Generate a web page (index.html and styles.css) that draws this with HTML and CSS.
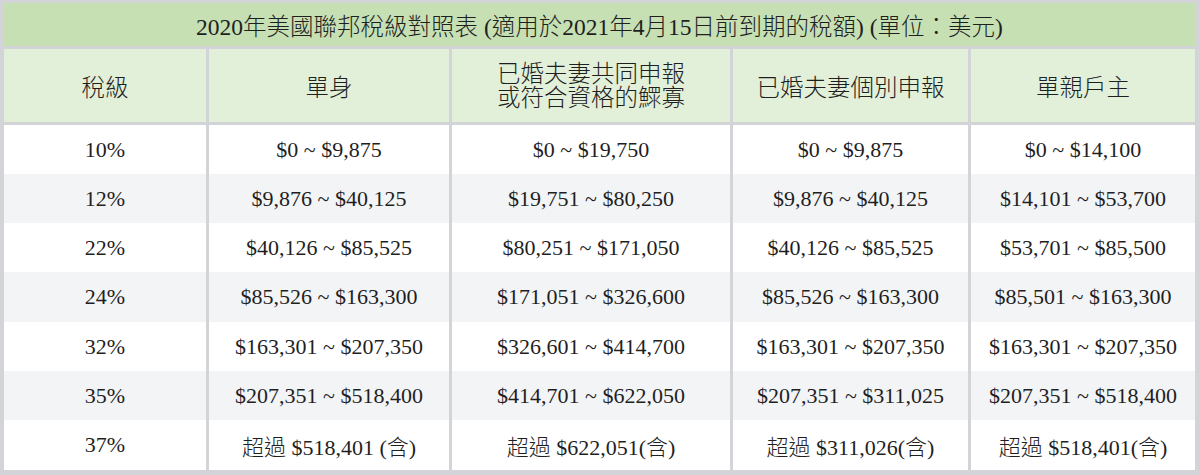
FILE: index.html
```html
<!DOCTYPE html>
<html lang="zh-Hant">
<head>
<meta charset="utf-8">
<link rel="stylesheet" href="styles.css">
</head>
<body>
<div class="table">
  <div class="title">2020年美國聯邦稅級對照表 (適用於2021年4月15日前到期的稅額) (單位：美元)</div>
  <div class="row head">
    <div class="cell">稅級</div>
    <div class="cell">單身</div>
    <div class="cell two">已婚夫妻共同申報<br>或符合資格的鰥寡</div>
    <div class="cell">已婚夫妻個別申報</div>
    <div class="cell">單親戶主</div>
  </div>
  <div class="body">
    <div class="row r49">
      <div class="cell">10%</div><div class="cell">$0 ~ $9,875</div><div class="cell">$0 ~ $19,750</div><div class="cell">$0 ~ $9,875</div><div class="cell">$0 ~ $14,100</div>
    </div>
    <div class="row r49 alt">
      <div class="cell">12%</div><div class="cell">$9,876 ~ $40,125</div><div class="cell">$19,751 ~ $80,250</div><div class="cell">$9,876 ~ $40,125</div><div class="cell">$14,101 ~ $53,700</div>
    </div>
    <div class="row r49">
      <div class="cell">22%</div><div class="cell">$40,126 ~ $85,525</div><div class="cell">$80,251 ~ $171,050</div><div class="cell">$40,126 ~ $85,525</div><div class="cell">$53,701 ~ $85,500</div>
    </div>
    <div class="row r50 alt">
      <div class="cell">24%</div><div class="cell">$85,526 ~ $163,300</div><div class="cell">$171,051 ~ $326,600</div><div class="cell">$85,526 ~ $163,300</div><div class="cell">$85,501 ~ $163,300</div>
    </div>
    <div class="row r49">
      <div class="cell">32%</div><div class="cell">$163,301 ~ $207,350</div><div class="cell">$326,601 ~ $414,700</div><div class="cell">$163,301 ~ $207,350</div><div class="cell">$163,301 ~ $207,350</div>
    </div>
    <div class="row r49 alt">
      <div class="cell">35%</div><div class="cell">$207,351 ~ $518,400</div><div class="cell">$414,701 ~ $622,050</div><div class="cell">$207,351 ~ $311,025</div><div class="cell">$207,351 ~ $518,400</div>
    </div>
    <div class="row r50">
      <div class="cell">37%</div><div class="cell">超過 $518,401 (含)</div><div class="cell">超過 $622,051(含)</div><div class="cell">超過 $311,026(含)</div><div class="cell">超過 $518,401(含)</div>
    </div>
  </div>
</div>
</body>
</html>
```

FILE: styles.css
```css
html, body {
  margin: 0;
  padding: 0;
  background: #ffffff;
}

.table {
  width: 1200px;
  height: 475px;
  box-sizing: border-box;
  background: #d3d4d8;
  padding: 3px 5px 5px 4px;
  font-family: "Liberation Serif", "Noto Sans CJK TC", serif;
  font-weight: 300;
  color: #1f1f1f;
  font-size: 22px;
}

.title {
  height: 43px;
  background: #c6e0b4;
  display: flex;
  align-items: center;
  justify-content: center;
  font-size: 23.5px;
}

.row {
  display: grid;
  grid-template-columns: 202px 240px 278px 235px 224px;
  column-gap: 3px;
}

.head {
  margin-top: 3px;
  height: 73px;
}

.head .cell {
  background: #e2efd9;
  font-size: 23.5px;
}

.two {
  line-height: 24px;
}

.body {
  margin-top: 3px;
}

.cell {
  display: flex;
  align-items: center;
  justify-content: center;
  text-align: center;
  background: #ffffff;
}

.r49 { height: 49px; }
.r50 { height: 50px; }

.alt .cell {
  background: #f3f4f6;
}
```
